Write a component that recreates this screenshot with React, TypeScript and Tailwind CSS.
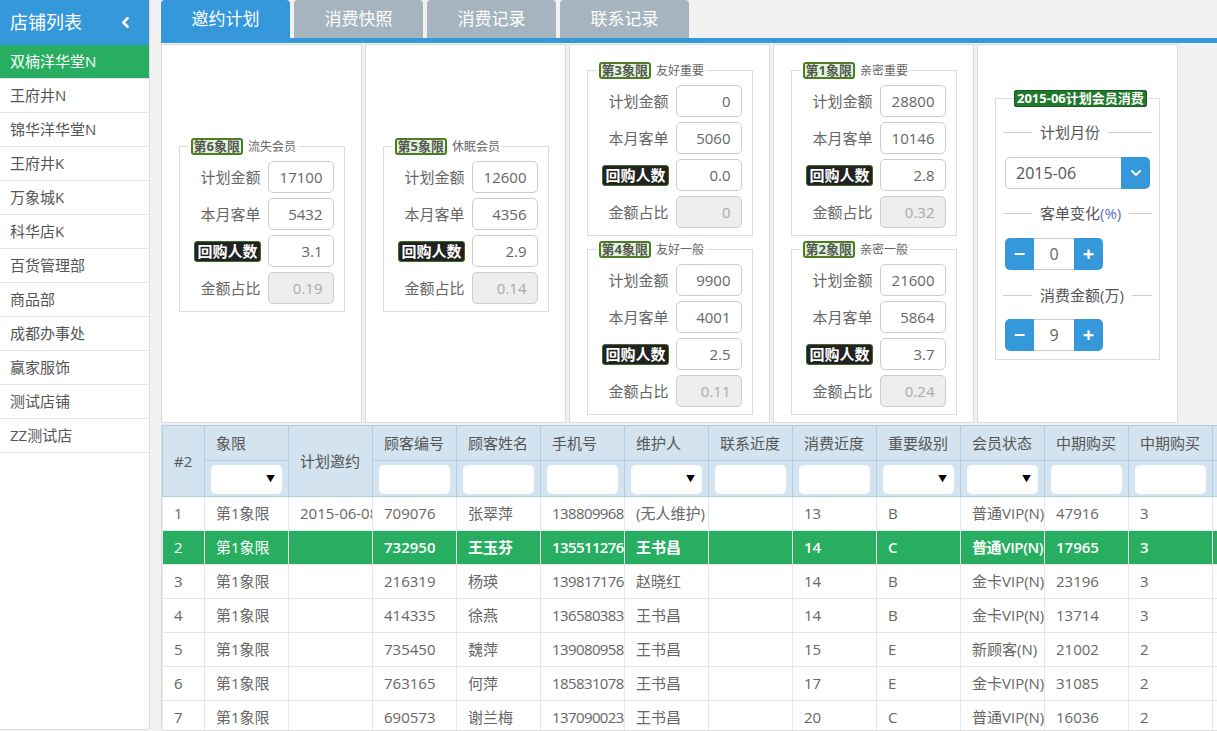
import React from 'react';
import { ChevronLeft, ChevronDown } from 'lucide-react';

const stores = ['双楠洋华堂N', '王府井N', '锦华洋华堂N', '王府井K', '万象城K', '科华店K', '百货管理部', '商品部', '成都办事处', '赢家服饰', '测试店铺', 'ZZ测试店'];

const tabs = ['邀约计划', '消费快照', '消费记录', '联系记录'];

type Q = { n: number; name: string; vals: string[] };

const columns = [
  { title: '#2', w: 'w-[42px]', filter: 'none' },
  { title: '象限', w: 'w-[84px]', filter: 'select' },
  { title: '计划邀约', w: 'w-[84px]', filter: 'none' },
  { title: '顾客编号', w: 'w-[84px]', filter: 'text' },
  { title: '顾客姓名', w: 'w-[84px]', filter: 'text' },
  { title: '手机号', w: 'w-[84px]', filter: 'text' },
  { title: '维护人', w: 'w-[84px]', filter: 'select' },
  { title: '联系近度', w: 'w-[84px]', filter: 'text' },
  { title: '消费近度', w: 'w-[84px]', filter: 'text' },
  { title: '重要级别', w: 'w-[84px]', filter: 'select' },
  { title: '会员状态', w: 'w-[84px]', filter: 'select' },
  { title: '中期购买', w: 'w-[84px]', filter: 'text' },
  { title: '中期购买', w: 'w-[84px]', filter: 'text' },
  { title: '', w: 'w-[84px]', filter: 'text' },
  { title: '', w: 'w-[84px]', filter: 'text' },
];

const rows = [
  ['1', '第1象限', '2015-06-08', '709076', '张翠萍', '138809968', '(无人维护)', '', '13', 'B', '普通VIP(N)', '47916', '3', '', ''],
  ['2', '第1象限', '', '732950', '王玉芬', '135511276', '王书昌', '', '14', 'C', '普通VIP(N)', '17965', '3', '', ''],
  ['3', '第1象限', '', '216319', '杨瑛', '139817176', '赵晓红', '', '14', 'B', '金卡VIP(N)', '23196', '3', '', ''],
  ['4', '第1象限', '', '414335', '徐燕', '136580383', '王书昌', '', '14', 'B', '金卡VIP(N)', '13714', '3', '', ''],
  ['5', '第1象限', '', '735450', '魏萍', '139080958', '王书昌', '', '15', 'E', '新顾客(N)', '21002', '2', '', ''],
  ['6', '第1象限', '', '763165', '何萍', '185831078', '王书昌', '', '17', 'E', '金卡VIP(N)', '31085', '2', '', ''],
  ['7', '第1象限', '', '690573', '谢兰梅', '137090023', '王书昌', '', '20', 'C', '普通VIP(N)', '16036', '2', '', ''],
];

const labels = ['计划金额', '本月客单', '回购人数', '金额占比'];

function Quadrant({ n, name, vals }: Q) {
  return (
    <fieldset className="mx-auto w-[166px] border border-[#dcdcdc] pt-[1px] pb-[7px]">
      <legend className="ml-[9px] px-[2px] text-[12px] leading-[17px]">
        <span className="inline-block h-[17px] align-top rounded-[3px] border-2 border-[#4b7d24] bg-[#e0f6d6] px-[1px] text-[13px] leading-[13px] font-bold text-[#555]">
          第{n}象限
        </span>
        <span className="ml-[5px] text-[#666]">{name}</span>
      </legend>
      {labels.map((l, i) => (
        <div key={l} className="mt-[5px] flex items-center justify-end gap-[7px] pr-[10px]">
          {i === 2 ? (
            <span className="rounded-[3px] border border-[#3d6b22] bg-[#222] px-[2px] text-[15px] leading-[19px] font-bold text-white">{l}</span>
          ) : (
            <span className="text-[15px] text-[#666]">{l}</span>
          )}
          <div
            className={`h-[32px] w-[66px] rounded-[5px] border border-[#ccc] pr-[10px] text-right text-[15px] leading-[30px] ${
              i === 3 ? 'bg-[#eee] text-[#aaa]' : 'bg-white text-[#666]'
            }`}
          >
            {vals[i]}
          </div>
        </div>
      ))}
    </fieldset>
  );
}

function Divider({ children }: { children: React.ReactNode }) {
  return (
    <div className="-mx-[2px] flex h-[20px] items-center">
      <div className="h-px w-[29px] bg-[#ccc]" />
      <span className="mx-[8px] text-[15px] text-[#555]">{children}</span>
      <div className="h-px flex-1 bg-[#ccc]" />
    </div>
  );
}

function Spinner({ value }: { value: string }) {
  return (
    <div className="flex h-[32px] w-[98px]">
      <div className="flex w-[29px] items-center justify-center rounded-l-[5px] bg-[#3498db] text-[20px] font-bold text-white">−</div>
      <div className="w-[40px] border-y border-[#ccc] bg-white text-center text-[16px] leading-[30px] text-[#666]">{value}</div>
      <div className="flex w-[29px] items-center justify-center rounded-r-[5px] bg-[#3498db] text-[20px] font-bold text-white">+</div>
    </div>
  );
}

const Card: React.FC<{ children: React.ReactNode; pt: string }> = ({ children, pt }) => (
  <div className={`h-[379px] w-[201px] shrink-0 border border-[#dcdcdc] bg-white ${pt}`}>{children}</div>
);

export default function App() {
  return (
    <div className="flex h-[731px] w-[1217px] overflow-hidden bg-[#f1f1f1] [font-family:'Open_Sans','Noto_Sans_CJK_SC',sans-serif]">
      {/* sidebar */}
      <div className="h-[730px] w-[150px] shrink-0 rounded-br-[4px] border-r border-b border-[#ddd] bg-white">
        <div className="flex h-[45px] items-center justify-between bg-[#3498db] pr-[15px] pl-[10px] text-[18px] text-white">
          <span>店铺列表</span>
          <ChevronLeft size={17} strokeWidth={3.5} />
        </div>
        {stores.map((s, i) => (
          <div
            key={s}
            className={`flex h-[34px] items-center border-b border-[#e6e6e6] pl-[10px] text-[15px] ${
              i === 0 ? 'bg-[#27ae60] text-white' : 'text-[#555]'
            }`}
          >
            {s}
          </div>
        ))}
      </div>

      {/* main */}
      <div className="ml-[11px] flex min-w-0 flex-1 flex-col">
        <div className="flex h-[38px] items-end gap-[4px]">
          {tabs.map((t, i) => (
            <div
              key={t}
              className={`flex h-[38px] w-[129px] items-center justify-center rounded-t-[4px] text-[17px] text-white ${
                i === 0 ? 'bg-[#3498db]' : 'bg-[#a5b4be]'
              }`}
            >
              {t}
            </div>
          ))}
        </div>
        <div className="h-[5px] bg-[#3498db]" />

        <div className="flex gap-[3px] pt-[1px]">
          <Card pt="pt-[93px]">
            <Quadrant n={6} name="流失会员" vals={['17100', '5432', '3.1', '0.19']} />
          </Card>
          <Card pt="pt-[93px]">
            <Quadrant n={5} name="休眠会员" vals={['12600', '4356', '2.9', '0.14']} />
          </Card>
          <Card pt="pt-[17px]">
            <Quadrant n={3} name="友好重要" vals={['0', '5060', '0.0', '0']} />
            <div className="h-[5px]" />
            <Quadrant n={4} name="友好一般" vals={['9900', '4001', '2.5', '0.11']} />
          </Card>
          <Card pt="pt-[17px]">
            <Quadrant n={1} name="亲密重要" vals={['28800', '10146', '2.8', '0.32']} />
            <div className="h-[5px]" />
            <Quadrant n={2} name="亲密一般" vals={['21600', '5864', '3.7', '0.24']} />
          </Card>
          <Card pt="pt-[45px]">
            <fieldset className="mx-auto w-[165px] border border-[#dcdcdc] px-[9px] pt-[15px] pb-[8px]">
              <legend className="ml-[9px] text-[13px] leading-[17px]">
                <span className="inline-block h-[17px] align-top rounded-[2px] border border-[#185a20] bg-[#217a2c] px-[2px] leading-[15px] font-bold text-white">
                  2015-06计划会员消费
                </span>
              </legend>
              <Divider>计划月份</Divider>
              <div className="mt-[15px] flex h-[32px]">
                <div className="flex-1 rounded-l-[5px] border border-r-0 border-[#ccc] pl-[10px] text-[16px] leading-[30px] text-[#555]">2015-06</div>
                <div className="flex w-[29px] items-center justify-center rounded-r-[5px] bg-[#3498db] text-white">
                  <ChevronDown size={16} strokeWidth={3} />
                </div>
              </div>
              <div className="mt-[14px]">
                <Divider>
                  客单变化<span className="text-[#5b6fc7]">(%)</span>
                </Divider>
              </div>
              <div className="mt-[15px]">
                <Spinner value="0" />
              </div>
              <div className="mt-[15px]">
                <Divider>消费金额(万)</Divider>
              </div>
              <div className="mt-[14px]">
                <Spinner value="9" />
              </div>
            </fieldset>
          </Card>
        </div>

        {/* table */}
        <div className="mt-[2px] h-[306px] overflow-hidden rounded-bl-[4px] border-b border-l border-[#ddd] bg-white">
          <table className="w-[1218px] table-fixed border-collapse">
            <colgroup>
              {columns.map((c, i) => (
                <col key={i} className={c.w} />
              ))}
            </colgroup>
            <thead className="bg-[#d3e3f0]">
              <tr className="h-[35px]">
                {columns.map((c, i) =>
                  c.filter === 'none' ? (
                    <th
                      key={i}
                      rowSpan={2}
                      className="border border-[#b0cde4] pl-[11px] text-left text-[15px] font-normal text-[#555]"
                    >
                      {c.title}
                    </th>
                  ) : (
                    <th
                      key={i}
                      className="overflow-hidden border border-[#b0cde4] pl-[11px] text-left text-[15px] font-normal whitespace-nowrap text-[#555]"
                    >
                      {c.title}
                    </th>
                  )
                )}
              </tr>
              <tr className="h-[36px]">
                {columns
                  .filter((c) => c.filter !== 'none')
                  .map((c, i) => (
                    <th key={i} className="border border-[#b0cde4] px-[6px] pt-[1px] font-normal">
                      <div className="relative h-[29px] rounded-[5px] bg-white">
                        {c.filter === 'select' && (
                          <span className="absolute top-[8px] right-[7px] text-[9px] leading-[12px] text-black">▼</span>
                        )}
                      </div>
                    </th>
                  ))}
              </tr>
            </thead>
            <tbody>
              {rows.map((r, ri) => {
                const sel = ri === 1;
                return (
                  <tr key={ri} className={`h-[34px] ${sel ? 'bg-[#27ae60] text-white' : 'text-[#666]'}`}>
                    {r.map((v, ci) => (
                      <td
                        key={ci}
                        className={`overflow-hidden border border-[#e6e6e6] pl-[11px] text-[15px] whitespace-nowrap ${
                          sel ? 'border-[#27ae60]' : ''
                        } ${sel && ci > 1 ? 'font-semibold' : ''} ${ci === 5 ? 'tracking-[-0.6px]' : ''} ${
                          sel && ci === 10 ? 'tracking-[-0.4px]' : ''
                        }`}
                      >
                        {v}
                      </td>
                    ))}
                  </tr>
                );
              })}
            </tbody>
          </table>
        </div>
      </div>
    </div>
  );
}
